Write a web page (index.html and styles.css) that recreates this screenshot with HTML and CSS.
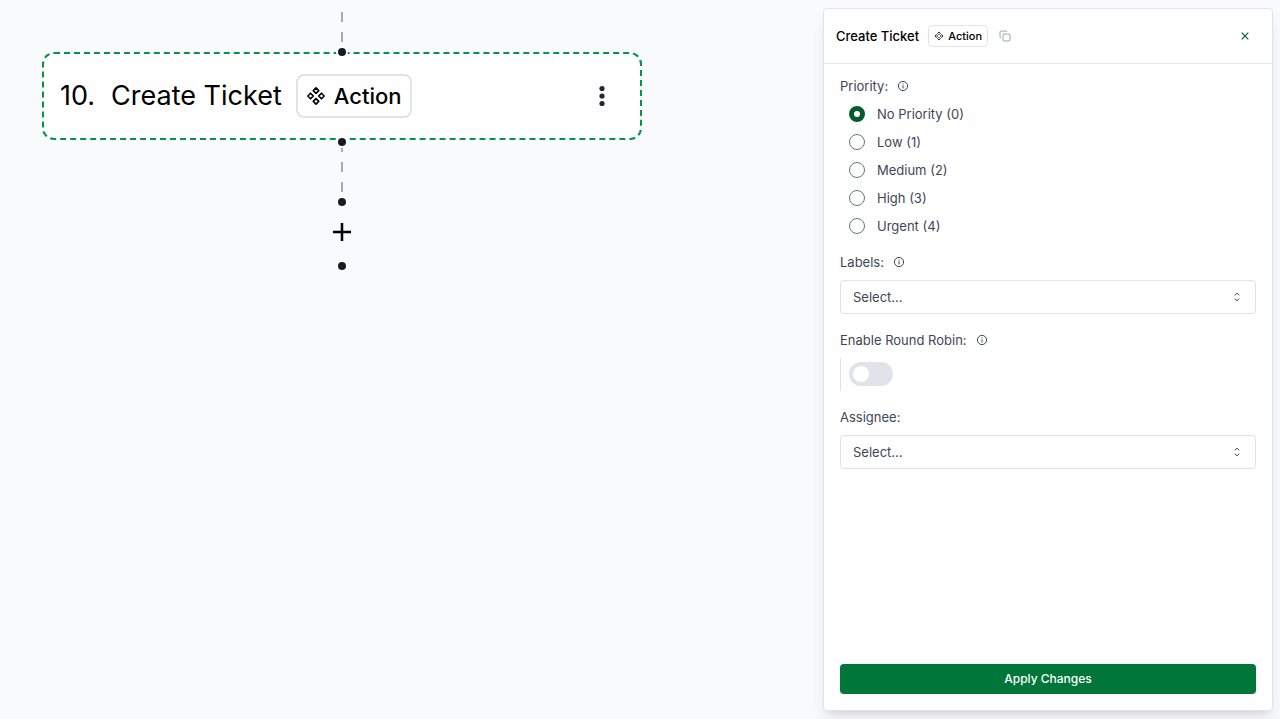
FILE: index.html
```html
<!DOCTYPE html>
<html lang="en">
<head>
<meta charset="utf-8">
<meta name="viewport" content="width=device-width, initial-scale=1">
<title>Create Ticket</title>
<link rel="stylesheet" href="styles.css">
</head>
<body>
<svg class="sprite" aria-hidden="true">
  <symbol id="icon-component" viewBox="0 0 24 24"><path d="M5.500 8.700 8.800 12l-3.300 3.300L2.200 12l3.300-3.300Z M12 2.200l3.300 3.300L12 8.800 8.700 5.500 12 2.200Z M18.500 8.700 21.800 12l-3.300 3.300L15.200 12l3.300-3.300Z M12 15.200l3.300 3.300L12 21.800l-3.300-3.300L12 15.200Z"/></symbol>
  <symbol id="icon-info" viewBox="0 0 12 12"><circle cx="6" cy="6" r="4.600"/><path d="M6 5.300v3.200M6 3.400v1"/></symbol>
  <symbol id="icon-chevrons" viewBox="0 0 12 12"><path d="M3.700 4.400 6 2.200l2.300 2.200M3.700 7.600 6 9.800l2.300-2.200"/></symbol>
</svg>
<div class="app">
  <main class="canvas">
    <svg class="edge edge-in" viewBox="0 0 2 40" aria-hidden="true"><path d="M1 0V40"/></svg>
    <svg class="edge edge-out" viewBox="0 0 2 60" aria-hidden="true"><path d="M1 0V60"/></svg>
    <section class="node">
      <h1 class="node-title"><span>10.</span><span>Create Ticket</span></h1>
      <span class="badge badge-large"><svg class="badge-icon" aria-hidden="true"><use href="#icon-component"/></svg>Action</span>
      <button class="icon-button node-menu" type="button" aria-label="Node options">
        <svg viewBox="0 0 24 24" aria-hidden="true"><circle cx="12" cy="4.500" r="2.600"/><circle cx="12" cy="12" r="2.600"/><circle cx="12" cy="19.500" r="2.600"/></svg>
      </button>
    </section>
    <span class="handle handle-top"></span>
    <span class="handle handle-bottom"></span>
    <span class="handle handle-add-top"></span>
    <button class="icon-button add-node" type="button" aria-label="Add node">
      <svg viewBox="0 0 24 24" aria-hidden="true"><path d="M12 3v18M3 12h18"/></svg>
    </button>
    <span class="handle handle-add-bottom"></span>
  </main>

  <aside class="panel">
    <header class="panel-header">
      <h2 class="panel-title">Create Ticket</h2>
      <span class="badge"><svg class="badge-icon" aria-hidden="true"><use href="#icon-component"/></svg>Action</span>
      <button class="icon-button copy" type="button" aria-label="Copy">
        <svg viewBox="0 0 24 24" aria-hidden="true"><rect x="8" y="8" width="14" height="14" rx="2"/><path d="M4 16c-1.100 0-2-.9-2-2V4c0-1.100.9-2 2-2h10c1.100 0 2 .9 2 2"/></svg>
      </button>
      <button class="icon-button close" type="button" aria-label="Close">
        <svg viewBox="0 0 8 8" aria-hidden="true"><path d="M.7.7 7.300 7.300M7.300.7.7 7.300"/></svg>
      </button>
    </header>
    <form class="panel-form">
      <fieldset class="field priority">
        <legend class="label">Priority:<svg class="info" aria-hidden="true"><use href="#icon-info"/></svg></legend>
        <label class="option"><input type="radio" name="priority" value="0" checked>No Priority (0)</label>
        <label class="option"><input type="radio" name="priority" value="1">Low (1)</label>
        <label class="option"><input type="radio" name="priority" value="2">Medium (2)</label>
        <label class="option"><input type="radio" name="priority" value="3">High (3)</label>
        <label class="option"><input type="radio" name="priority" value="4">Urgent (4)</label>
      </fieldset>
      <div class="field">
        <label class="label" for="labels">Labels:<svg class="info" aria-hidden="true"><use href="#icon-info"/></svg></label>
        <div class="select-wrap">
          <select id="labels" class="select"><option>Select...</option></select>
          <svg class="chevrons" aria-hidden="true"><use href="#icon-chevrons"/></svg>
        </div>
      </div>
      <div class="field">
        <label class="label" for="round-robin">Enable Round Robin:<svg class="info" aria-hidden="true"><use href="#icon-info"/></svg></label>
        <div class="switch-row"><input id="round-robin" class="switch" type="checkbox" role="switch"></div>
      </div>
      <div class="field">
        <label class="label" for="assignee">Assignee:</label>
        <div class="select-wrap">
          <select id="assignee" class="select"><option>Select...</option></select>
          <svg class="chevrons" aria-hidden="true"><use href="#icon-chevrons"/></svg>
        </div>
      </div>
      <button class="apply" type="submit">Apply Changes</button>
    </form>
  </aside>
</div>
</body>
</html>
```
FILE: styles.css
```css
* {
  box-sizing: border-box;
}

body {
  margin: 0;
  background: #f8fafc;
  color: #000;
  font: 400 13px/20px Inter, "Liberation Sans", sans-serif;
}

svg {
  display: block;
  fill: none;
  stroke: currentColor;
}

.sprite {
  position: absolute;
  width: 0;
  height: 0;
}

button,
select {
  font: inherit;
}

.icon-button {
  display: grid;
  place-items: center;
  padding: 0;
  border: 0;
  background: none;
  color: inherit;
  cursor: pointer;
}

.app {
  display: flex;
  min-height: 100vh;
}

/* Flow canvas */
.canvas {
  position: relative;
  flex: 1;
  min-width: 0;
}

.edge {
  position: absolute;
  left: 341px;
  width: 2px;
  color: #a9a9b2;
  stroke-width: 2;
  stroke-dasharray: 10 10;
}

.edge-in {
  top: 12px;
  height: 40px;
}

.edge-out {
  top: 142px;
  height: 60px;
}

.node {
  position: absolute;
  top: 52px;
  left: 42px;
  display: flex;
  align-items: center;
  gap: 14px;
  width: 600px;
  padding: 20px 26px 20px 16px;
  border: 2px dashed #009845;
  border-radius: 12px;
  background: #fff;
}

.node-title {
  display: flex;
  gap: 16px;
  margin: 0;
  font-size: 27px;
  font-weight: 400;
  line-height: 40px;
}

.node-menu {
  width: 24px;
  height: 24px;
  margin-left: auto;
  color: #1f2937;
}

.node-menu svg {
  width: 24px;
  height: 24px;
  fill: currentColor;
  stroke: none;
}

.handle {
  position: absolute;
  left: 336px;
  width: 12px;
  height: 12px;
  border: 2px solid #fff;
  border-radius: 50%;
  background: #1a192b;
}

.handle-top {
  top: 46px;
}

.handle-bottom {
  top: 136px;
}

.handle-add-top {
  top: 196px;
}

.handle-add-bottom {
  top: 260px;
}

.add-node {
  position: absolute;
  top: 220px;
  left: 330px;
  width: 24px;
  height: 24px;
}

.add-node svg {
  width: 24px;
  height: 24px;
  stroke-width: 2.5;
}

.badge {
  display: flex;
  align-items: center;
  gap: 4px;
  padding: 2px 5px;
  border: 1px solid #e2e3e9;
  border-radius: 4px;
  background: #fff;
  font-size: 11px;
  font-weight: 500;
  line-height: 16px;
}

.badge-icon {
  width: 10px;
  height: 10px;
  stroke-width: 2;
  stroke-linejoin: round;
}

.badge-large {
  gap: 8px;
  padding: 4px 8px;
  border-width: 2px;
  border-radius: 8px;
  font-size: 22px;
  line-height: 32px;
}

.badge-large .badge-icon {
  width: 20px;
  height: 20px;
}

/* Settings panel */
.panel {
  display: flex;
  flex-direction: column;
  width: 450px;
  margin: 8px 7px 8px 0;
  border: 1px solid #e1e3e6;
  border-radius: 4px;
  background: #fff;
  box-shadow: 0 10px 15px -3px rgb(0 0 0 / 10%), 0 4px 6px -4px rgb(0 0 0 / 10%);
}

.panel-header {
  display: flex;
  align-items: center;
  gap: 9px;
  height: 55px;
  padding: 0 15px 0 12px;
  border-bottom: 1px solid #e1e3e6;
}

.panel-title {
  margin: 0;
  font-size: 13px;
  font-weight: 500;
  line-height: 20px;
}

.copy {
  width: 16px;
  height: 16px;
  color: #9ca3af;
}

.copy svg {
  width: 12px;
  height: 12px;
  stroke-width: 2;
}

.close {
  width: 24px;
  height: 24px;
  margin-left: auto;
  color: #045c2c;
}

.close svg {
  width: 8px;
  height: 8px;
  stroke-width: 1.2;
}

.panel-form {
  display: flex;
  flex: 1;
  flex-direction: column;
  gap: 16px;
  padding: 12px 16px 16px;
  color: #3d4656;
}

.field {
  display: flex;
  flex-direction: column;
  gap: 8px;
  min-width: 0;
  margin: 0;
  padding: 0;
  border: 0;
}

.label {
  display: flex;
  align-items: center;
  gap: 9px;
  padding: 0;
}

.info {
  width: 12px;
  height: 12px;
}

.option {
  display: flex;
  align-items: center;
  gap: 12px;
  margin-left: 9px;
}

.option input {
  width: 16px;
  height: 16px;
  margin: 0;
  border: 1px solid #6b7280;
  border-radius: 50%;
  appearance: none;
}

.option input:checked {
  border: 5px solid #045c2c;
}

.priority .label {
  margin-bottom: 8px;
}

.select-wrap {
  position: relative;
}

.select {
  display: block;
  width: 100%;
  height: 34px;
  padding: 0 32px 0 12px;
  border: 1px solid #e1e3e6;
  border-radius: 4px;
  background: #fff;
  color: inherit;
  appearance: none;
}

.chevrons {
  position: absolute;
  top: 11px;
  right: 13px;
  width: 12px;
  height: 12px;
  pointer-events: none;
}

.switch-row {
  padding: 4px 8px 5px;
  border-left: 1px solid #e1e3e6;
}

.switch {
  display: block;
  width: 44px;
  height: 24px;
  margin: 0;
  padding: 4px;
  border-radius: 12px;
  background: #e2e3e9;
  appearance: none;
}

.switch::before {
  display: block;
  width: 16px;
  height: 16px;
  border-radius: 50%;
  background: #fff;
  content: "";
}

.switch:checked {
  background: #007639;
}

.switch:checked::before {
  margin-left: auto;
}

.apply {
  margin-top: auto;
  height: 30px;
  padding: 0 12px;
  border: 0;
  border-radius: 4px;
  background: #007639;
  color: #fff;
  font-size: 12px;
  font-weight: 500;
}
```
